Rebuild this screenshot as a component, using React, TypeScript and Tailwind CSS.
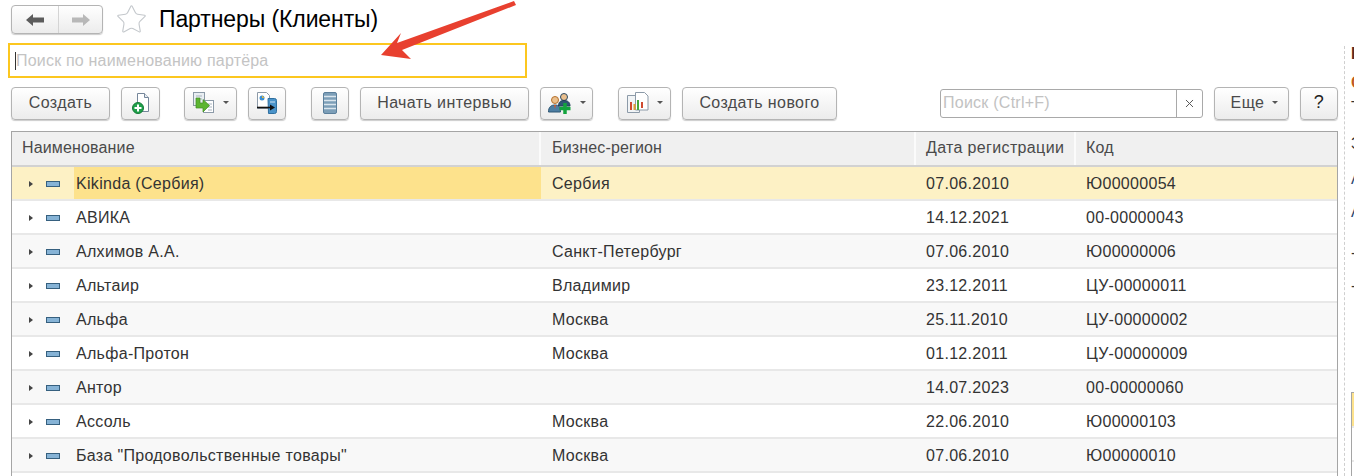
import type { ReactNode } from 'react';
import { Star, X } from 'lucide-react';

type Partner = { name: string; region: string; date: string; code: string };

const partners: Partner[] = [
  { name: 'Kikinda (Сербия)', region: 'Сербия', date: '07.06.2010', code: 'Ю00000054' },
  { name: 'АВИКА', region: '', date: '14.12.2021', code: '00-00000043' },
  { name: 'Алхимов А.А.', region: 'Санкт-Петербург', date: '07.06.2010', code: 'Ю00000006' },
  { name: 'Альтаир', region: 'Владимир', date: '23.12.2011', code: 'ЦУ-00000011' },
  { name: 'Альфа', region: 'Москва', date: '25.11.2010', code: 'ЦУ-00000002' },
  { name: 'Альфа-Протон', region: 'Москва', date: '01.12.2011', code: 'ЦУ-00000009' },
  { name: 'Антор', region: '', date: '14.07.2023', code: '00-00000060' },
  { name: 'Ассоль', region: 'Москва', date: '22.06.2010', code: 'Ю00000103' },
  { name: 'База "Продовольственные товары"', region: 'Москва', date: '07.06.2010', code: 'Ю00000010' },
];

const columns = 'grid grid-cols-[529px_375px_160px_minmax(0,1fr)]';

function Btn({ className, children }: { className: string; children: ReactNode }) {
  return (
    <div
      className={`flex h-[33px] shrink-0 items-center justify-center rounded-[4px] border border-[#b4b4b4] bg-gradient-to-b from-white to-[#ececec] pb-[2px] text-[16px] tracking-[0.4px] text-[#4a4a4a] shadow-[0_1px_1px_rgba(0,0,0,0.2)] ${className}`}
    >
      {children}
    </div>
  );
}

function Caret() {
  return <span className="ml-2 h-0 w-0 border-x-[3px] border-t-[3px] border-x-transparent border-t-[#555]" />;
}

function NavArrow({ color, flip }: { color: string; flip?: boolean }) {
  return (
    <svg width="18" height="12" viewBox="0 0 18 12" className={flip ? 'scale-x-[-1]' : ''}>
      <path d="M0 6l7-6v3.500h11v5h-11v3.500z" fill={color} />
    </svg>
  );
}

function AddDocIcon() {
  return (
    <svg width="18" height="22" viewBox="0 0 18 22">
      <path d="M5.500 1.500h7l4 4v14h-11z" fill="#fff" stroke="#75869a" />
      <path d="M12.500 1.500v4h4" fill="#e6ecf2" stroke="#75869a" />
      <circle cx="6" cy="16" r="5.500" fill="#1fa04a" stroke="#147a36" />
      <path d="M6 12.500v7M2.500 16h7" stroke="#fff" strokeWidth="2" />
    </svg>
  );
}

function CopyArrowIcon() {
  return (
    <svg width="22" height="22" viewBox="0 0 22 22">
      <rect x="0.500" y="0.500" width="11" height="13" fill="#e9eef2" stroke="#8c9aa8" />
      <path d="M3 4h6M3 7h6" stroke="#a8b4bf" />
      <rect x="10.500" y="8.500" width="10" height="12" fill="#fff" stroke="#8c9aa8" />
      <path d="M15 12h4M15 15h4M15 18h4" stroke="#a8b4bf" />
      <path d="M3 6h4v5h3V7.500l6.500 6-6.500 6.500v-4H3z" fill="#5cb531" stroke="#3f8c24" strokeWidth="0.700" />
    </svg>
  );
}

function ExportIcon() {
  return (
    <svg width="22" height="22" viewBox="0 0 22 22">
      <path d="M1.500 0.500h9l3 3v13h-12z" fill="#fff" stroke="#8c9aa8" />
      <circle cx="6" cy="6" r="2.500" fill="#3b8ed0" />
      <path d="M6 3.500v2.500h2.500" fill="#e8b93a" />
      <path d="M12 6.500h6.500a2 2 0 0 1 2 2v11a2 2 0 0 1-2 2h-6z" fill="#4a93c9" stroke="#2e6f9f" />
      <path d="M14 10h5" stroke="#cfe3f2" />
      <path d="M1 15.500h14" stroke="#111" strokeWidth="1.600" />
      <path d="M14 12.500l5 3-5 3z" fill="#111" />
    </svg>
  );
}

function ListIcon() {
  return (
    <svg width="14" height="22" viewBox="0 0 14 22">
      <rect x="0.500" y="0.500" width="13" height="21" rx="1.500" fill="#7d9fb8" stroke="#5b7f9b" />
      <path d="M1 4.500h12M1 8.500h12M1 12.500h12M1 16.500h12" stroke="#dbe6ee" strokeWidth="1.300" />
    </svg>
  );
}

function PeopleAddIcon() {
  return (
    <svg width="24" height="22" viewBox="0 0 24 22">
      <circle cx="7" cy="8" r="3.500" fill="#eabf8d" stroke="#b5702b" />
      <path d="M0.500 20c0-5 2.500-7 6.500-7s5.500 2 5.500 7z" fill="#4d7ea3" stroke="#2f5673" />
      <path d="M6 13l1 4 1-4z" fill="#d4572b" />
      <circle cx="16" cy="5" r="3.500" fill="#eabf8d" stroke="#2c4a63" />
      <path d="M10.500 14c0-4 2-5.500 5.500-5.500s6 1.500 6 5.500z" fill="#2f5673" stroke="#24405a" />
      <path d="M17 11v11M11.500 16.500h11" stroke="#12a33d" strokeWidth="3.500" />
    </svg>
  );
}

function ChartIcon() {
  return (
    <svg width="22" height="22" viewBox="0 0 22 22">
      <path d="M0.500 3.500h9l3 3v14h-12z" fill="#f1f4f6" stroke="#8c9aa8" />
      <path d="M8.500 0.500h9l3.500 3.500v14h-12.500z" fill="#fff" stroke="#8c9aa8" />
      <path d="M4 10v8" stroke="#cf4a30" strokeWidth="2" />
      <path d="M7.500 12v6" stroke="#e0a030" strokeWidth="2" />
      <path d="M11 8v10" stroke="#45a83a" strokeWidth="2" />
      <path d="M15 10v6" stroke="#cf4a30" strokeWidth="2" />
    </svg>
  );
}

function Toolbar() {
  return (
    <div className="mt-[9px] flex items-center pl-[11px]">
      <Btn className="w-[99px]">Создать</Btn>
      <Btn className="ml-[11px] w-[39px]">
        <AddDocIcon />
      </Btn>
      <Btn className="ml-[24px] w-[53px]">
        <CopyArrowIcon />
        <Caret />
      </Btn>
      <Btn className="ml-[11px] w-[38px]">
        <ExportIcon />
      </Btn>
      <Btn className="ml-[25px] w-[38px]">
        <ListIcon />
      </Btn>
      <Btn className="ml-[11px] w-[169px]">Начать интервью</Btn>
      <Btn className="ml-[11px] w-[53px]">
        <PeopleAddIcon />
        <Caret />
      </Btn>
      <Btn className="ml-[25px] w-[53px]">
        <ChartIcon />
        <Caret />
      </Btn>
      <Btn className="ml-[11px] w-[155px]">Создать нового</Btn>
      <div className="ml-[103px] flex h-[29px] w-[263px] rounded-[3px] border border-[#a9a9a9] bg-white">
        <div className="flex-1 pl-[2px] text-[16px] leading-[26px] tracking-[0.25px] text-[#c2c2c2]">Поиск (Ctrl+F)</div>
        <div className="flex w-[26px] items-center justify-center border-l border-[#a9a9a9]">
          <X size={13} strokeWidth={1.800} className="text-[#555]" />
        </div>
      </div>
      <Btn className="ml-[11px] w-[75px] pl-[6px]">
        Еще
        <Caret />
      </Btn>
      <Btn className="ml-[11px] w-[38px] text-[18px] text-[#222]">?</Btn>
    </div>
  );
}

function PartnerTable() {
  return (
    <div className="ml-[11px] mt-[11px] w-[1327px] border border-b-0 border-[#a5a5a5] bg-white">
      <div className={`${columns} h-[35px] border-b-2 border-[#d2d2d2] bg-[#f0f0f0] text-[16px] leading-[32px] tracking-[0.15px] text-[#4a4a4a]`}>
        <div className="border-r-2 border-[#fbfbfb] pl-[10px]">Наименование</div>
        <div className="border-r-2 border-[#fbfbfb] pl-[11px]">Бизнес-регион</div>
        <div className="border-r-2 border-[#fbfbfb] pl-[10px] tracking-[0.35px]">Дата регистрации</div>
        <div className="pl-[10px]">Код</div>
      </div>
      {partners.map((p, i) => (
        <div
          key={p.code}
          className={`${columns} h-[34px] border-b-2 border-[#e8e8e8] text-[16px] leading-[34px] tracking-[0.3px] text-[#333] ${
            i === 0 ? 'bg-[#fdf1c5]' : i % 2 === 1 ? 'bg-white' : 'bg-[#f8f8f8]'
          }`}
        >
          <div className="flex h-[32px]">
            <div className="flex w-[62px] shrink-0 items-center pl-[17px] pt-[2px]">
              <span className="h-0 w-0 border-y-[3.500px] border-l-[4px] border-y-transparent border-l-[#444]" />
              <span className="ml-[13px] h-[6px] w-[14px] border border-[#36607f] bg-[#86b3d6]" />
            </div>
            <div className={`flex-1 pl-[2px] ${i === 0 ? 'bg-[#fde28c]' : ''}`}>{p.name}</div>
          </div>
          <div className="h-[32px] pl-[11px]">{p.region}</div>
          <div className="h-[32px] pl-[10px]">{p.date}</div>
          <div className="h-[32px] pl-[10px]">{p.code}</div>
        </div>
      ))}
      <div className="h-[34px] bg-white" />
    </div>
  );
}

function SidePeek() {
  return (
    <div className="ml-[5px] mt-[46px] h-[430px] w-[11px] shrink-0 overflow-hidden border-l border-dashed border-[#cfcfcf] pl-[6px] text-[16px] leading-[16px]">
      <div className="h-[29px] font-bold text-[#5a2a20]">К</div>
      <div className="h-[25px] font-bold text-[#c05a20]">С</div>
      <div className="h-[36px] text-[#333]">Т</div>
      <div className="h-[35px] text-[#333]">З</div>
      <div className="h-[33px] text-[#2c4a73]">А</div>
      <div className="h-[41px] text-[#2c4a73]">А</div>
      <div className="h-[33px] text-[#333]">-</div>
      <div className="h-[114px] text-[#333]">-</div>
      <div className="border-l border-t border-[#a5a5a5]">
        <div className="h-[33px] bg-[#fde28c]" />
        <div className="h-[34px] border-t-2 border-[#e8e8e8]" />
        <div className="h-[34px] border-t-2 border-[#e8e8e8]" />
      </div>
    </div>
  );
}

export default function App() {
  return (
    <div className="relative flex h-[476px] w-[1354px] overflow-hidden bg-white font-['Liberation_Sans',Arial,sans-serif]">
      <div className="w-[1339px] shrink-0">
        <div className="flex h-[34px] items-center pl-[11px] pt-[5px]">
          <div className="flex h-[29px] w-[92px] rounded-[4px] border border-[#b4b4b4] bg-gradient-to-b from-white to-[#ececec] shadow-[0_1px_1px_rgba(0,0,0,0.2)]">
            <div className="flex w-[47px] items-center justify-center border-r border-[#d4d4d4]">
              <NavArrow color="#5c5c5c" />
            </div>
            <div className="flex flex-1 items-center justify-center">
              <NavArrow color="#b8b8b8" flip />
            </div>
          </div>
          <Star size={33} strokeWidth={0.800} className="ml-[12px] text-[#c4c8cc]" />
          <h1 className="ml-[11px] text-[23px] leading-[29px] tracking-[-0.1px] text-black">Партнеры (Клиенты)</h1>
        </div>
        <div className="ml-[8px] mt-[9px] flex h-[35px] w-[519px] items-center border-2 border-[#fcc71f] pl-[5px] text-[16px] tracking-[0.2px] text-[#c4c4c4]">
          <span className="h-[18px] w-px bg-[#333]" />
          Поиск по наименованию партёра
        </div>
        <Toolbar />
        <PartnerTable />
      </div>
      <SidePeek />
      <svg className="absolute left-[375px] top-0" width="145" height="65" viewBox="375 0 145 65">
        <path d="M514 1L397 43l4-10-20 22 30 4-9-9 114-45z" fill="#e8402f" />
      </svg>
    </div>
  );
}
